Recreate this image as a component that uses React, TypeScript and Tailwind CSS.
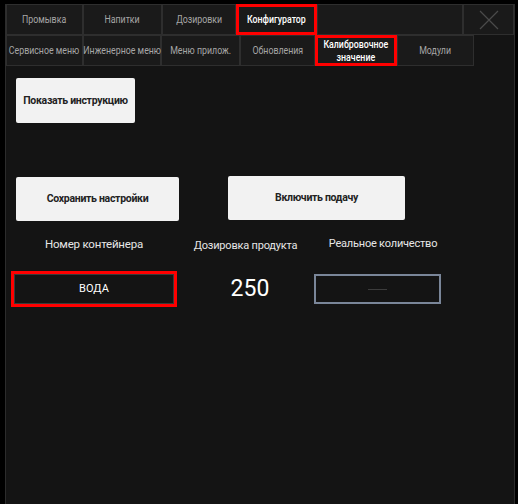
import React from "react";

const Tab = ({ label, w, active = false }: { label: React.ReactNode; w: string; active?: boolean }) => {
  return (
    <div
      className={`${w} h-full flex items-center justify-center text-center whitespace-nowrap border border-[#2e2e2e] bg-[#1a1a1a] text-[10px] leading-[13px] ${
        active ? "text-white font-medium outline-[3px] outline-[#ff0000] -outline-offset-[3px] outline-solid" : "text-[#a6a6a6]"
      }`}
    >
      <span className="inline-block scale-x-[0.88]">{label}</span>
    </div>
  );
};

const btn = "bg-[#f2f2f2] rounded-[2px] text-[#222] font-bold text-[10.5px] tracking-[-0.3px]";

export default function App() {
  return (
    <div className="w-[518px] h-[504px] bg-black overflow-hidden pt-[4px] pl-[5px]" style={{ fontFamily: "Roboto, 'Noto Sans', sans-serif" }}>
      <div className="w-[510px] h-[500px] flex flex-col bg-[#141414] border-x border-[#2c2c2c]">
        {/* верхний ряд вкладок */}
        <div className="flex h-[31px] shrink-0 bg-black">
          <Tab w="w-[77px]" label="Промывка" />
          <Tab w="w-[79px]" label="Напитки" />
          <Tab w="w-[74px]" label="Дозировки" />
          <Tab w="w-[81px]" label="Конфигуратор" active />
          <div className="flex-1 h-full border border-[#2e2e2e] bg-[#1a1a1a]" />
          <div className="w-[51px] h-full border border-[#2e2e2e] bg-[#1a1a1a] flex items-center justify-center">
            <svg width="20" height="20" viewBox="0 0 20 20">
              <path d="M1 1 L19 19 M19 1 L1 19" stroke="#4a4a4a" strokeWidth="1.2" />
            </svg>
          </div>
        </div>

        {/* второй ряд вкладок */}
        <div className="flex h-[31px] shrink-0">
          <Tab w="w-[77px]" label="Сервисное меню" />
          <Tab w="w-[78px]" label="Инженерное меню" />
          <Tab w="w-[79px]" label="Меню прилож." />
          <Tab w="w-[75px]" label="Обновления" />
          <Tab w="w-[82px]" label={<>Калибровочное<br />значение</>} active />
          <Tab w="w-[77px]" label="Модули" />
        </div>

        {/* содержимое */}
        <div className="flex-1 pl-[10px] pt-[12px]">
          <button className={`w-[119px] h-[45px] ${btn}`}>Показать инструкцию</button>

          <div className="flex mt-[54px]">
            <button className={`w-[163px] h-[44px] ${btn}`}>Сохранить настройки</button>
            <button className={`ml-[49px] -mt-px w-[177px] h-[44px] ${btn}`}>Включить подачу</button>
          </div>

          <div className="flex items-center h-[16px] mt-[16px] text-[#e6e6e6] text-[11px] tracking-[-0.2px]">
            <div className="-ml-[5px] w-[166px] text-center text-[11.5px]">Номер контейнера</div>
            <div className="w-[137px] text-center mt-[3px]">Дозировка продукта</div>
            <div className="w-[138px] text-center -mt-[1px]">Реальное количество</div>
          </div>

          <div className="flex items-center mt-[18px]">
            <div className="-ml-[5px] w-[166px] h-[36px] border-[3px] border-[#ff0000]">
              <div className="h-full border border-[#3a3a3a] bg-[#141414] flex items-center justify-center text-white text-[11px]">
                ВОДА
              </div>
            </div>
            <div className="w-[137px] pl-[9px] text-center text-white text-[23px]">250</div>
            <div className="w-[127px] h-[30px] border-2 border-[#7a8699] bg-[#141414] flex items-center justify-center">
              <div className="w-[19px] h-px bg-[#3c3c3c]" />
            </div>
          </div>
        </div>
      </div>
    </div>
  );
}
